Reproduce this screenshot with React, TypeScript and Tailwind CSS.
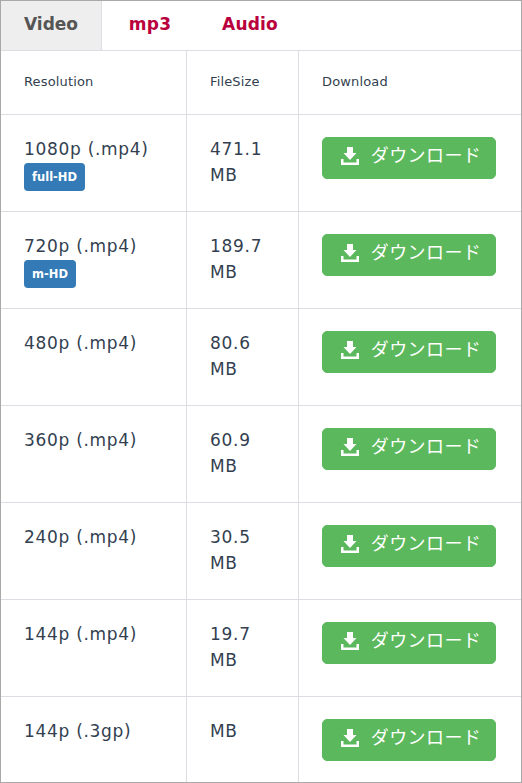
const rows = [
  { res: "1080p (.mp4)", badge: "full-HD", size: ["471.1", "MB"] },
  { res: "720p (.mp4)", badge: "m-HD", size: ["189.7", "MB"] },
  { res: "480p (.mp4)", size: ["80.6", "MB"] },
  { res: "360p (.mp4)", size: ["60.9", "MB"] },
  { res: "240p (.mp4)", size: ["30.5", "MB"] },
  { res: "144p (.mp4)", size: ["19.7", "MB"] },
  { res: "144p (.3gp)", size: ["MB"] },
];

function DownloadIcon() {
  return (
    <svg viewBox="0 0 18 18" className="h-[18px] w-[18px] shrink-0" fill="#fff">
      <path d="M6 0h6v6h3.5L9 13 2.5 6H6z" />
      <path d="M0 12h2.5v3.5h13V12H18v6H0z" />
    </svg>
  );
}

export default function App() {
  return (
    <div className="h-[783px] w-[522px] overflow-hidden border border-[#a9a9a9] bg-white font-['DejaVu_Sans','Noto_Sans_CJK_JP',sans-serif] text-[#333f50]">
      <div className="flex h-[50px] border-b border-[#dddde3] text-[17px] font-bold text-[#b9003c]">
        <div className="flex w-[101px] items-center justify-center border-r border-[#dddde3] bg-[#eeeeee] pb-[2px] text-[#555555]">
          Video
        </div>
        <div className="flex w-[96px] items-center justify-center pb-[2px] tracking-[0.2px]">mp3</div>
        <div className="flex w-[104px] items-center justify-center pb-[2px] tracking-[0.2px]">Audio</div>
      </div>
      <div className="flex h-[64px] border-b border-[#dddde3] text-[13px] tracking-[0.15px]">
        <div className="flex w-[186px] items-center border-r border-[#dddde3] pb-px pl-[23px]">Resolution</div>
        <div className="flex w-[112px] items-center border-r border-[#dddde3] pb-px pl-[23px]">FileSize</div>
        <div className="flex flex-1 items-center pb-px pl-[23px]">Download</div>
      </div>
      {rows.map((row) => (
        <div key={row.res + row.size[0]} className="flex h-[97px] border-b border-[#dddde3] text-[17px] leading-[26px] tracking-[0.7px] last:border-b-0">
          <div className="w-[186px] border-r border-[#dddde3] pl-[23px] pt-[21px]">
            <div>{row.res}</div>
            {row.badge && (
              <span className="mt-px flex h-[28px] w-fit items-center rounded-[4px] bg-[#337ab7] px-[8px] text-[11.5px] font-bold tracking-normal text-white">
                {row.badge}
              </span>
            )}
          </div>
          <div className="w-[112px] border-r border-[#dddde3] pl-[23px] pt-[21px]">
            {row.size.map((line) => (
              <div key={line}>{line}</div>
            ))}
          </div>
          <div className="flex-1 pl-[23px] pt-[22px]">
            <button className="flex h-[42px] w-[174px] items-center justify-center gap-[12px] rounded-[5px] border border-[#5cb85c] bg-[#5cb85c] pb-[4px] pl-[4px] text-[18px] tracking-[0.4px] text-white">
              <DownloadIcon />
              ダウンロード
            </button>
          </div>
        </div>
      ))}
    </div>
  );
}
